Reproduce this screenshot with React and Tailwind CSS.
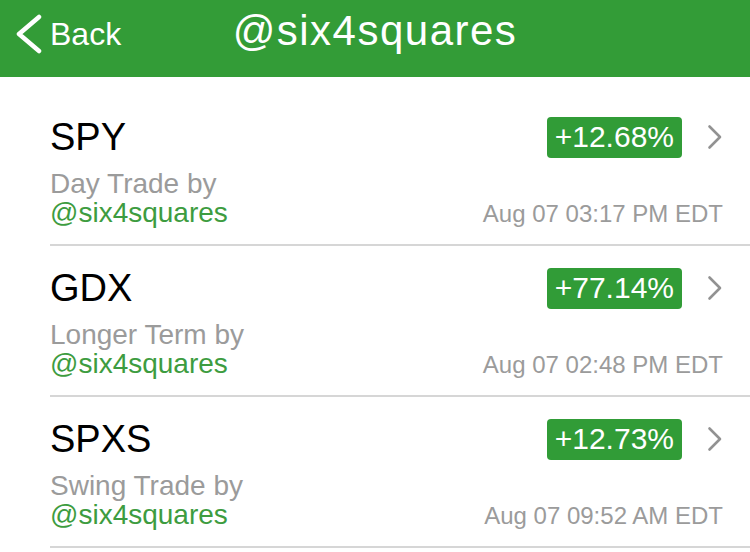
import React from 'react';

const trades = [
  { id: 1, symbol: 'SPY', change: '+12.68%', kind: 'Day Trade by', time: 'Aug 07 03:17 PM EDT' },
  { id: 2, symbol: 'GDX', change: '+77.14%', kind: 'Longer Term by', time: 'Aug 07 02:48 PM EDT' },
  { id: 3, symbol: 'SPXS', change: '+12.73%', kind: 'Swing Trade by', time: 'Aug 07 09:52 AM EDT' },
];

const TradeRow = ({ symbol, change, kind, time }) => {
  return (
    <div className="ml-[50px] h-[151px] border-b-2 border-[#d6d6d6] pr-[27px] pt-[20px]">
      <div className="flex h-[44px] items-center">
        <span className="text-[38px] leading-[44px] text-black">{symbol}</span>
        <span className="ml-auto flex h-[41px] items-center rounded-[4px] bg-[#319c37] px-[8px] text-[30px] leading-none text-white">
          {change}
        </span>
        <svg className="ml-[25px]" width="16" height="26" viewBox="0 0 16 26" fill="none">
          <path d="M2.5 2.5 L13 13 L2.5 23.5" stroke="#929292" strokeWidth="2.6" strokeLinecap="round" strokeLinejoin="round" />
        </svg>
      </div>
      <div className="mt-[10px] text-[28px] leading-[29px] text-[#9b9b9b]">{kind}</div>
      <div className="flex items-baseline justify-between">
        <span className="text-[28px] leading-[29px] text-[#3d9c40]">@six4squares</span>
        <span className="text-[24px] leading-[29px] text-[#9b9b9b]">{time}</span>
      </div>
    </div>
  );
};

export default function App() {
  return (
    <div className="h-[552px] w-[750px] overflow-hidden bg-white font-['Liberation_Sans',Arial,sans-serif]">
      {/* nav bar */}
      <div className="grid h-[77px] grid-cols-[1fr_auto_1fr] items-start bg-[#339c37] text-white">
        <div className="mt-[14px] flex h-[40px] items-center pl-[14px]">
          <svg width="28" height="42" viewBox="0 0 28 42" fill="none">
            <path d="M25 4 L5 21 L25 38" stroke="white" strokeWidth="4.5" strokeLinecap="round" strokeLinejoin="round" />
          </svg>
          <span className="ml-[8px] text-[32px] leading-[40px]">Back</span>
        </div>
        <div className="mt-[7px] text-[42px] leading-[48px] tracking-[1.5px]">@six4squares</div>
        <div />
      </div>

      <div className="pt-[18px]">
        {trades.map((t) => (
          <TradeRow key={t.id} {...t} />
        ))}
      </div>
    </div>
  );
}
